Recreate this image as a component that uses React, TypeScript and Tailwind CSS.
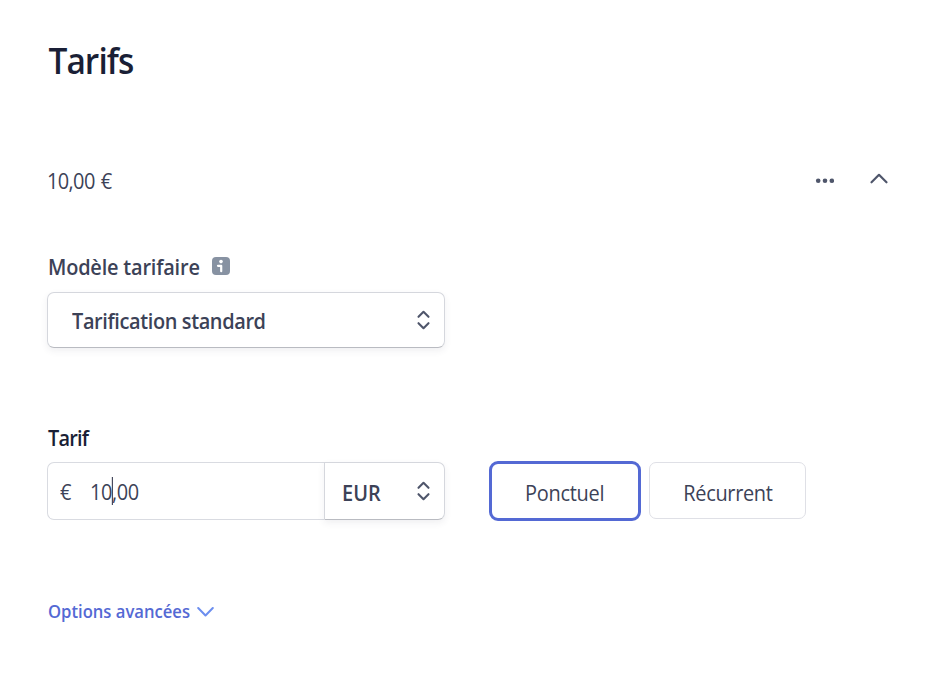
import React from "react";

function Selector() {
  return (
    <svg width="14" height="20" viewBox="0 0 14 20" fill="none" stroke="#4f566b" strokeWidth="2.1" strokeLinecap="round" strokeLinejoin="round">
      <path d="M1.5 6.8 6.5 1.8l5 5M1.5 13.2l5 5 5-5" />
    </svg>
  );
}

export default function App() {
  return (
    <main className="flex h-[678px] w-[929px] flex-col bg-white pl-[47px] font-['Open_Sans','Noto_Sans',sans-serif] text-[21px] leading-7 text-[#3c4257]">
      <h1 className="mt-[36px] h-[50px] origin-left scale-x-[0.93] pl-[1.5px] text-[36px] leading-[50px] font-semibold tracking-[-1px] text-[#1a1f36]">
        <span className="-ml-[32px] pl-[32px]">Tarifs</span>
      </h1>

      <div className="mt-[80px] flex h-7 w-[842px] items-center justify-between">
        <span className="inline-block origin-left scale-x-95 pt-px tracking-[-0.65px] [word-spacing:1.5px]">10,00 €</span>
        <div className="mt-0.5 flex items-center gap-[35px]">
          <button aria-label="Actions">
            <svg className="block" width="20" height="8" viewBox="0 0 20 8" fill="#4f566b">
              <circle cx="4.2" cy="3.8" r="2.3" />
              <circle cx="11" cy="3.8" r="2.3" />
              <circle cx="17.8" cy="3.8" r="2.3" />
            </svg>
          </button>
          <button aria-label="Réduire" className="-mt-[5px]">
            <svg className="block" width="20" height="12" viewBox="0 0 20 12" fill="none" stroke="#4f566b" strokeWidth="2.2" strokeLinecap="round" strokeLinejoin="round">
              <path d="m2.5 9.3 7.5-7.5 7.5 7.5" />
            </svg>
          </button>
        </div>
      </div>

      <div className="mt-[59px] flex h-7 items-center">
        <label className="w-[165px] origin-left scale-x-95 pl-px font-semibold tracking-[-0.2px]">Modèle tarifaire</label>
        <svg className="-mt-[3px]" width="18" height="18" viewBox="0 0 18 18">
          <rect width="18" height="18" rx="4" fill="#8792a2" />
          <circle cx="9" cy="4.6" r="1.8" fill="white" />
          <path d="M6 8.8h3.2V14.2" fill="none" stroke="white" strokeWidth="2.2" strokeLinecap="round" strokeLinejoin="round" />
        </svg>
      </div>

      <button className="mt-[11px] flex h-[56px] w-[398px] items-center justify-between rounded-[7px] border border-[#d5d7dd] border-b-[#b9bbc1] pr-[13px] pl-6 font-semibold shadow-[0_3px_7px_rgba(60,66,87,0.08)]">
        <span className="origin-left scale-x-95 pt-px tracking-[-0.4px]">Tarification standard</span>
        <Selector />
      </button>

      <label className="mt-[76px] h-7 origin-left scale-x-95 self-start pl-px font-semibold tracking-[-0.85px] text-[#1a1f36]">Tarif</label>

      <div className="mt-[9px] flex h-[60px] items-center">
        <div className="flex h-[58px] w-[398px]">
          <div className="flex w-[277px] items-center rounded-l-[7px] border border-r-0 border-[#d9dbe1] pl-3">
            <span className="w-[30px] origin-left scale-x-95 pt-px">€</span>
            <div className="flex origin-left scale-x-95 tracking-[-0.4px]">
              <span className="pt-px">10</span>
              <span className="-mr-px h-7 w-px bg-[#1a1f36]" />
              <span className="pt-px">,00</span>
            </div>
          </div>
          <button className="flex w-[121px] items-center justify-between rounded-r-[7px] border border-[#d5d7dd] border-b-[#b9bbc1] pr-[13px] pl-[17px] font-semibold shadow-[0_3px_7px_rgba(60,66,87,0.08)]">
            <span className="origin-left scale-x-95 pt-[3px]">EUR</span>
            <Selector />
          </button>
        </div>
        <button className="ml-11 h-[60px] w-[152px] rounded-[9px] border-3 border-[#5469d4] pt-1">
          <span className="inline-block scale-x-95 tracking-[-0.3px]">Ponctuel</span>
        </button>
        <button className="ml-2 -mt-px h-[57px] w-[157px] rounded-[7px] border border-[#dfe0e6] pt-[5px]">
          <span className="inline-block scale-x-95 tracking-[-0.35px]">Récurrent</span>
        </button>
      </div>

      <button className="mt-[76px] flex h-7 items-center self-start pl-px text-[17.5px] font-semibold text-[#5469d4]">
        <span className="w-[149px] origin-left scale-x-95 text-left whitespace-nowrap">Options avancées</span>
        <svg className="mt-0.5" width="17" height="12" viewBox="0 0 17 12" fill="none" stroke="#6c8eef" strokeWidth="2" strokeLinecap="round" strokeLinejoin="round">
          <path d="m1.2 2 7.3 7.5L15.8 2" />
        </svg>
      </button>
    </main>
  );
}
